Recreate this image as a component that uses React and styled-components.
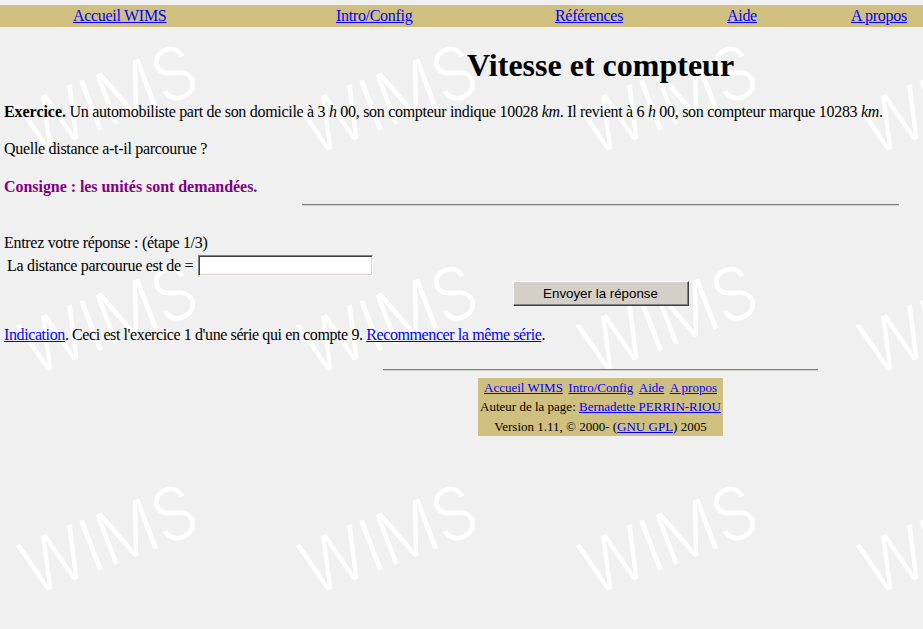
import React from "react";
import styled, { createGlobalStyle } from "styled-components";

const tileSvg = `<svg xmlns='http://www.w3.org/2000/svg' width='280' height='220'><text transform='translate(33 156) rotate(-21)' font-family='Inter, Roboto, DejaVu Sans, sans-serif' font-weight='300' font-size='73' fill='#ffffff' textLength='182' lengthAdjust='spacingAndGlyphs'>WIMS</text></svg>`;
const tileUrl = `data:image/svg+xml,${encodeURIComponent(tileSvg)}`;

const GlobalStyle = createGlobalStyle`
  html, body {
    margin: 0;
    padding: 0;
  }
  body {
    background-color: #f0f0f0;
    background-image: url("${tileUrl}");
    background-repeat: repeat;
    background-position: 0 0;
    font-family: "Liberation Serif", "Times New Roman", serif;
    font-size: 16px;
    letter-spacing: -0.3px;
    color: #000;
  }
  a {
    color: #0000ff;
    text-decoration: underline;
  }
  b {
    letter-spacing: -0.05px;
  }
`;

const Page = styled.div`
  display: flex;
  flex-direction: column;
  width: 923px;
`;

const TopNav = styled.nav`
  margin-top: 5px;
  height: 22px;
  background: #d0c080;
  display: grid;
  grid-template-columns: 263px 219px 172px 124px auto;
  align-items: center;
  padding-left: 73px;
  line-height: 18px;
`;

const NavLink = styled.a`
  justify-self: start;
`;

const Band = styled.div`
  display: flex;
  justify-content: center;
  padding-left: 278px;
  margin-top: ${(p) => p.$top}px;
`;

const Title = styled.h1`
  margin: 0;
  font-size: 32px;
  line-height: 37px;
  font-weight: bold;
  letter-spacing: 0;
`;

const Line = styled.p`
  margin: ${(p) => p.$top}px 0 0;
  padding: 0 4px;
  line-height: 18px;
  white-space: nowrap;
  letter-spacing: ${(p) => p.$tight || -0.3}px;
`;

const Instruction = styled(Line)`
  color: #800080;
  font-weight: bold;
  letter-spacing: -0.05px;
`;

const Var = styled.i``;

const Rule = styled.hr`
  margin: 0;
  width: ${(p) => p.$width}px;
  height: 0;
  border: none;
  border-top: 1px solid #7c7c7c;
  border-bottom: 1px solid #d6d6cc;
`;

const AnswerRow = styled.div`
  margin-top: 3px;
  height: 21px;
  display: flex;
  align-items: center;
  gap: 5px;
  padding-left: 7px;
  line-height: 18px;
  white-space: nowrap;
`;

const AnswerInput = styled.input`
  box-sizing: border-box;
  width: 175px;
  height: 21px;
  margin: 0;
  padding: 0 2px;
  background: #fff;
  border: 1px solid;
  border-color: #808080 #ffffff #ffffff #808080;
  box-shadow: inset 1px 1px 0 #404040, inset -1px -1px 0 #d4d0c8;
  outline: none;
  font-family: "Liberation Sans", Arial, sans-serif;
  font-size: 13px;
`;

const SubmitButton = styled.button`
  box-sizing: border-box;
  width: 176px;
  height: 25px;
  margin: 0;
  padding: 0;
  background: #d4d0c8;
  border: 1px solid;
  border-color: #ffffff #404040 #404040 #ffffff;
  box-shadow: inset -1px -1px 0 #808080;
  font-family: "Liberation Sans", Arial, sans-serif;
  font-size: 13.33px;
  letter-spacing: 0;
  color: #000;
`;

const FooterBox = styled.div`
  background: #d0c080;
  padding: 0 2px;
  font-size: 13px;
  letter-spacing: 0;
  line-height: 19.3px;
  text-align: center;
  white-space: nowrap;
`;

const FooterLinks = styled.div`
  display: flex;
  justify-content: center;
  gap: 5.5px;
`;

export default function App() {
  return (
    <>
      <GlobalStyle />
      <Page>
        <TopNav>
          <NavLink href="#">Accueil WIMS</NavLink>
          <NavLink href="#">Intro/Config</NavLink>
          <NavLink href="#">Références</NavLink>
          <NavLink href="#">Aide</NavLink>
          <NavLink href="#">A propos</NavLink>
        </TopNav>

        <Band $top={20}>
          <Title>Vitesse et compteur</Title>
        </Band>

        <Line $top={19}>
          <b>Exercice.</b> Un automobiliste part de son domicile à 3 <Var>h</Var> 00, son
          compteur indique 10028 <Var>km</Var>. Il revient à 6 <Var>h</Var> 00, son compteur
          marque 10283 <Var>km</Var>.
        </Line>
        <Line $top={19}>Quelle distance a-t-il parcourue ?</Line>
        <Instruction $top={20}>Consigne : les unités sont demandées.</Instruction>

        <Band $top={8}>
          <Rule $width={597} />
        </Band>

        <Line $top={28}>Entrez votre réponse : (étape 1/3)</Line>
        <AnswerRow>
          <span>La distance parcourue est de =</span>
          <AnswerInput type="text" />
        </AnswerRow>

        <Band $top={5}>
          <SubmitButton type="button">Envoyer la réponse</SubmitButton>
        </Band>

        <Line $top={20} $tight={-0.4}>
          <a href="#">Indication</a>. Ceci est l'exercice 1 d'une série qui en compte 9.{" "}
          <a href="#">Recommencer la même série</a>.
        </Line>

        <Band $top={25}>
          <Rule $width={435} />
        </Band>

        <Band $top={7}>
          <FooterBox>
            <FooterLinks>
              <a href="#">Accueil WIMS</a>
              <a href="#">Intro/Config</a>
              <a href="#">Aide</a>
              <a href="#">A propos</a>
            </FooterLinks>
            <div>
              Auteur de la page: <a href="#">Bernadette PERRIN-RIOU</a>
            </div>
            <div>
              Version 1.11, © 2000- (<a href="#">GNU GPL</a>) 2005
            </div>
          </FooterBox>
        </Band>
      </Page>
    </>
  );
}
